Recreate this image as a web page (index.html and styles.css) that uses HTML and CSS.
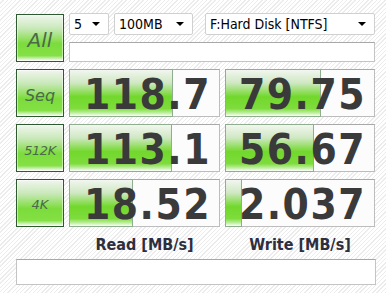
FILE: index.html
```html
<!DOCTYPE html>
<html lang="en">
<head>
    <meta charset="UTF-8">
    <title>CrystalDiskMark</title>
    <link rel="stylesheet" href="styles.css">
</head>
<body>
    <div class="app">
        <div class="grid">
            <button class="btn btn-all">All</button>
            <div class="controls">
                <div class="combos">
                    <div class="combo combo-count"><span>5</span><i class="arrow"></i></div>
                    <div class="combo combo-size"><span>100MB</span><i class="arrow"></i></div>
                    <div class="combo combo-drive"><span>F:Hard Disk [NTFS]</span><i class="arrow"></i></div>
                </div>
                <div class="field"></div>
            </div>

            <button class="btn btn-seq">Seq</button>
            <div class="meter"><div class="bar" style="width: 104px"></div><span class="value">118.7</span></div>
            <div class="meter"><div class="bar" style="width: 96px"></div><span class="value">79.75</span></div>

            <button class="btn btn-512">512K</button>
            <div class="meter"><div class="bar" style="width: 103px"></div><span class="value">113.1</span></div>
            <div class="meter"><div class="bar" style="width: 89px"></div><span class="value">56.67</span></div>

            <button class="btn btn-4k">4K</button>
            <div class="meter"><div class="bar" style="width: 64px"></div><span class="value">18.52</span></div>
            <div class="meter"><div class="bar" style="width: 17px"></div><span class="value">2.037</span></div>

            <div class="label label-read">Read [MB/s]</div>
            <div class="label label-write">Write [MB/s]</div>
        </div>
        <div class="status"></div>
    </div>
</body>
</html>
```

FILE: styles.css
```css
html, body {
    margin: 0;
    height: 100%;
}

body {
    background: repeating-linear-gradient(135deg, #ffffff 0 2px, #ececec 2px 3px);
    font-family: "DejaVu Sans Condensed", "DejaVu Sans", sans-serif;
    color: #333;
}

.app {
    padding: 14px 0 0 16px;
    width: 360px;
}

.grid {
    display: grid;
    grid-template-columns: 48px 151px 150px;
    grid-template-rows: repeat(4, 48px) 30px;
    column-gap: 5px;
    row-gap: 7px;
}

.btn {
    margin: 0;
    padding: 0;
    border: 1px solid #2f5a2f;
    background: linear-gradient(#f0f6ee 0%, #c8e8b8 30%, #7cdc3c 62%, #84e044 88%, #d6f4c4 96%, #ffffff 100%);
    box-shadow: inset 0 0 0 1px rgba(255, 255, 255, 0.5);
    font-family: "DejaVu Sans", sans-serif;
    font-style: italic;
    color: #4a6a4a;
    cursor: pointer;
}

.btn-all { font-size: 20px; padding-top: 4px; }
.btn-seq { font-size: 16px; padding-top: 4px; }
.btn-512 { font-size: 13px; padding-top: 4px; letter-spacing: -0.5px; }
.btn-4k { font-size: 13px; padding-top: 2px; }

.controls {
    grid-column: 2 / 4;
    display: flex;
    flex-direction: column;
    gap: 7px;
    margin-top: -1px;
}

.combos {
    display: flex;
    height: 22px;
}

.combo {
    display: flex;
    align-items: center;
    justify-content: space-between;
    box-sizing: border-box;
    height: 22px;
    padding: 0 8px 0 4px;
    background: #fff;
    border: 1px solid #d0d0d0;
    border-radius: 2px;
    font-size: 14px;
    color: #000;
}

.combo-count { width: 40px; }
.combo-size { width: 79px; margin-left: 5px; }
.combo-drive { width: 170px; margin-left: 12px; }

.arrow {
    width: 0;
    height: 0;
    border-left: 4px solid transparent;
    border-right: 4px solid transparent;
    border-top: 4px solid #000;
}

.field {
    height: 20px;
    box-sizing: border-box;
    background: #fff;
    border: 1px solid #c4c4c4;
    border-top-color: #a8a8a8;
}

.meter {
    position: relative;
    display: flex;
    align-items: center;
    justify-content: flex-end;
    box-sizing: border-box;
    background: #fcfcfc;
    border: 1px solid #a8a8a8;
    border-right-color: #bdbdbd;
    border-bottom-color: #bdbdbd;
}

.bar {
    position: absolute;
    left: -1px;
    top: -1px;
    bottom: -1px;
    box-sizing: border-box;
    border: 1px solid #8fae8f;
    background: linear-gradient(#f2f6f0 0%, #cfe8c2 28%, #72d82c 58%, #7edc3c 84%, #c4f0a8 94%, #ffffff 100%);
}

.value {
    position: relative;
    padding: 2px 8px 0 0;
    font-size: 42px;
    font-weight: bold;
    color: #3a3a3a;
    letter-spacing: 1.5px;
}

.label {
    grid-row: 5;
    text-align: center;
    font-size: 16px;
    font-weight: bold;
    color: #2e2e3e;
    padding-top: 1px;
}

.label-read { grid-column: 2; }
.label-write { grid-column: 3; }

.status {
    width: 360px;
    height: 26px;
    box-sizing: border-box;
    margin-top: -5px;
    background: #fff;
    border: 1px solid #c4c4c4;
    border-top-color: #a8a8a8;
}
```
